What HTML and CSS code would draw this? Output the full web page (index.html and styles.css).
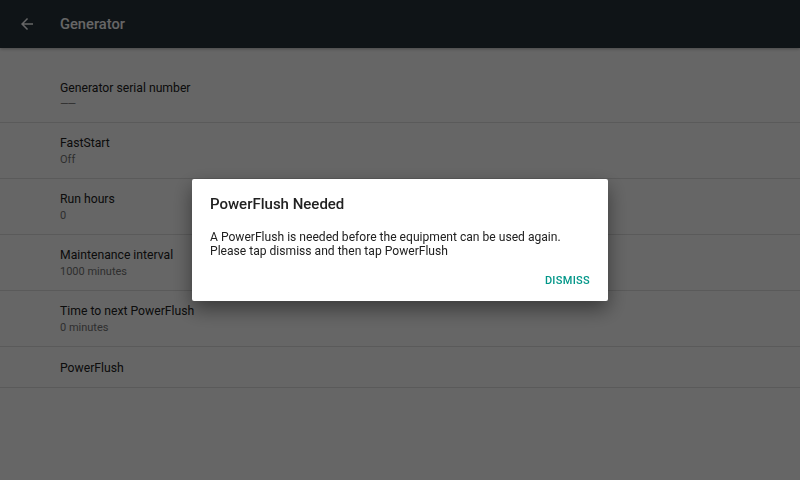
FILE: index.html
```html
<!DOCTYPE html>
<html lang="en">
  <head>
    <meta charset="UTF-8" />
    <meta name="viewport" content="width=device-width, initial-scale=1.0" />
    <title>Generator</title>
    <link rel="stylesheet" href="styles.css">
  </head>
  <body>
    <header class="app-bar">
      <span class="back">
        <svg width="18" height="18" viewBox="0 0 24 24"><path fill="#fff" d="M20 11H7.83l5.59-5.59L12 4l-8 8 8 8 1.41-1.41L7.83 13H20v-2z"/></svg>
      </span>
      <h1>Generator</h1>
    </header>

    <ul class="prefs">
      <li class="pref first">
        <div class="pref-title">Generator serial number</div>
        <div class="pref-summary dash">——</div>
      </li>
      <li class="pref">
        <div class="pref-title">FastStart</div>
        <div class="pref-summary">Off</div>
      </li>
      <li class="pref">
        <div class="pref-title">Run hours</div>
        <div class="pref-summary">0</div>
      </li>
      <li class="pref">
        <div class="pref-title">Maintenance interval</div>
        <div class="pref-summary">1000 minutes</div>
      </li>
      <li class="pref">
        <div class="pref-title">Time to next PowerFlush</div>
        <div class="pref-summary">0 minutes</div>
      </li>
      <li class="pref single">
        <div class="pref-title">PowerFlush</div>
      </li>
    </ul>

    <div class="scrim">
      <div class="dialog">
        <h2>PowerFlush Needed</h2>
        <p>A PowerFlush is needed before the equipment can be used again.<br>Please tap dismiss and then tap PowerFlush</p>
        <div class="actions">
          <button type="button" class="btn">DISMISS</button>
        </div>
      </div>
    </div>
  </body>
</html>
```

FILE: styles.css
```css
body {
  font-family: Roboto, "Liberation Sans", sans-serif;
  margin: 0;
  width: 800px;
  height: 480px;
  background-color: #fff;
  overflow: hidden;
}
.app-bar {
  display: flex;
  align-items: center;
  height: 48px;
  background-color: #26323a;
  box-shadow: 0 1px 3px rgba(0, 0, 0, 0.3);
}
.back {
  display: flex;
  justify-content: center;
  align-items: center;
  width: 54px;
  height: 48px;
}
.app-bar h1 {
  margin: 0 0 0 6px;
  font-size: 14.7px;
  font-weight: 500;
  color: #fff;
}
.prefs {
  list-style: none;
  margin: 0;
  padding: 0;
}
.pref {
  display: flex;
  flex-direction: column;
  justify-content: center;
  height: 53px;
  padding: 2px 0 0 60px;
  border-bottom: 1px solid #e0e0e0;
}
.pref.first {
  height: 75px;
  justify-content: flex-end;
  box-sizing: border-box;
  padding: 0 0 11px 60px;
}
.pref.single {
  height: 38px;
}
.pref-title {
  font-size: 12.2px;
  color: #212121;
  line-height: 17px;
}
.pref-summary {
  font-size: 11px;
  color: #757575;
  line-height: 16px;
}
.dash {
  font-size: 11px;
  line-height: 14px;
  letter-spacing: -1.2px;
}
.scrim {
  position: fixed;
  inset: 0;
  display: flex;
  justify-content: center;
  align-items: flex-start;
  background-color: rgba(0, 0, 0, 0.6);
}
.dialog {
  margin-top: 179px;
  width: 416px;
  box-sizing: border-box;
  padding: 15px 18px 12px;
  background: #fff;
  border-radius: 2px;
  box-shadow: 0 8px 20px rgba(0, 0, 0, 0.45);
}
.dialog h2 {
  margin: 0;
  font-size: 15px;
  font-weight: 500;
  color: #212121;
  line-height: 20px;
}
.dialog p {
  margin: 16px 0 0;
  font-size: 12.1px;
  line-height: 14px;
  color: #212121;
}
.actions {
  display: flex;
  justify-content: flex-end;
  margin-top: 15px;
}
.btn {
  padding: 0;
  background: none;
  border: none;
  font-family: inherit;
  font-size: 11px;
  font-weight: 500;
  letter-spacing: 0.3px;
  color: #009688;
  line-height: 16px;
  cursor: pointer;
}
```
